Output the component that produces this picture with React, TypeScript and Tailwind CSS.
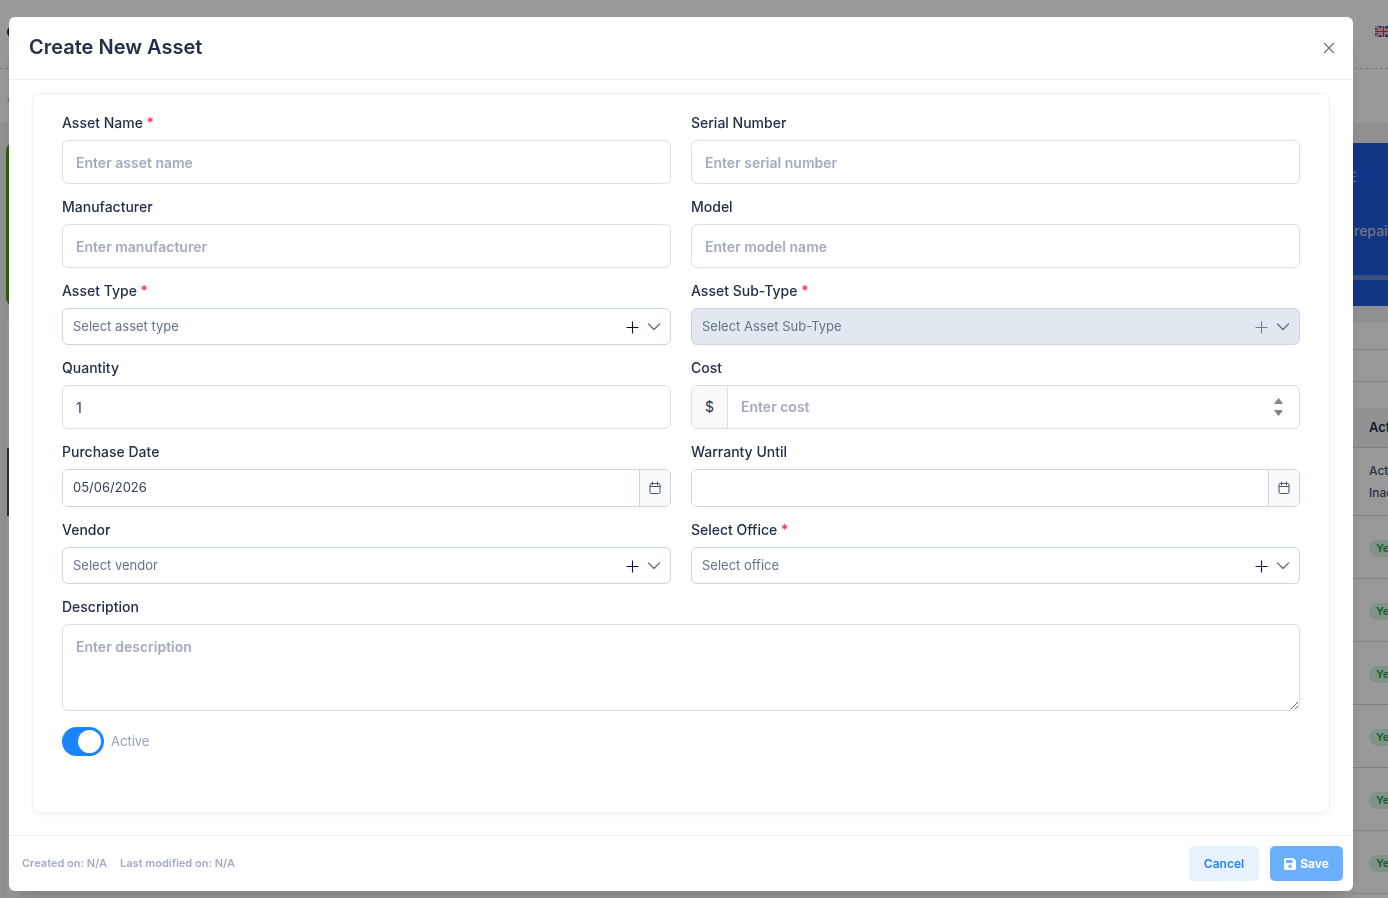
import { useState, type ReactNode } from 'react';

type FieldProps = {
  id: string;
  label: string;
  required?: boolean;
  className?: string;
  children: ReactNode;
};

const Field = ({ id, label, required, className = '', children }: FieldProps) => (
  <div className={`flex min-w-0 flex-col gap-[7px] ${className}`}>
    <label htmlFor={id} className="text-sm leading-5 font-medium text-[#252f4a]">
      {label}
      {required && <span className="text-[#f8285a]"> *</span>}
    </label>
    {children}
  </div>
);

const TextInput = ({ id, placeholder, defaultValue }: { id: string; placeholder?: string; defaultValue?: string }) => (
  <input
    id={id}
    type="text"
    placeholder={placeholder}
    defaultValue={defaultValue}
    className="h-11 w-full rounded-md border border-[#dbdfe9] bg-white px-[13px] text-sm font-medium text-[#4b5675] outline-none placeholder:font-semibold placeholder:text-[#a3abc0]"
  />
);

const PlusIcon = () => (
  <svg viewBox="0 0 13 13" className="size-[13px]" fill="none" stroke="currentColor" strokeWidth="1.1">
    <path d="M6.5 0.5v12M0.5 6.5h12" />
  </svg>
);

const ChevronIcon = () => (
  <svg
    viewBox="0 0 14 14"
    className="pointer-events-none size-[14px] shrink-0 text-[#64748b]"
    fill="none"
    stroke="currentColor"
    strokeWidth="1.4"
    strokeLinecap="round"
    strokeLinejoin="round"
  >
    <path d="M1.5 4 7 9.400l5.500-5.400" />
  </svg>
);

const CalendarIcon = () => (
  <svg viewBox="0 0 14 14" className="size-[14px]" fill="none" stroke="currentColor" strokeLinecap="round">
    <rect x="2" y="2.500" width="10" height="10" rx="1.300" />
    <path d="M2 5.500h10M4.500 1v3M9.500 1v3" />
  </svg>
);

const SaveIcon = () => (
  <svg viewBox="0 0 12 12" className="size-3" fill="currentColor" fillRule="evenodd">
    <path d="M1.700 0h7.600L12 2.700v7.600A1.700 1.700 0 0 1 10.300 12H1.700A1.700 1.700 0 0 1 0 10.300V1.700A1.700 1.700 0 0 1 1.700 0ZM2 2v3h6.500V2ZM6 6.500a1.700 1.700 0 1 0 0 3.400a1.700 1.700 0 0 0 0-3.400Z" />
  </svg>
);

const SelectField = ({
  id,
  label,
  placeholder,
  required,
  disabled,
}: {
  id: string;
  label: string;
  placeholder: string;
  required?: boolean;
  disabled?: boolean;
}) => (
  <Field id={id} label={label} required={required}>
    <div
      className={`flex h-[37px] items-center rounded-md border border-[#cbd5e1] pr-[9px] ${
        disabled ? 'bg-[#e2e8f0]' : 'bg-white'
      }`}
    >
      <select
        id={id}
        disabled={disabled}
        defaultValue=""
        className="h-full min-w-0 flex-1 appearance-none bg-transparent pl-[10px] text-[13px] text-[#64748b] opacity-100 outline-none"
      >
        <option value="">{placeholder}</option>
      </select>
      <button
        type="button"
        aria-label={`Add ${label}`}
        disabled={disabled}
        className="mr-2 pt-[2px] text-[#071437] disabled:opacity-50"
      >
        <PlusIcon />
      </button>
      <ChevronIcon />
    </div>
  </Field>
);

const DateField = ({ id, label, value }: { id: string; label: string; value?: string }) => (
  <Field id={id} label={label}>
    <div className="flex h-[38px] overflow-hidden rounded-md border border-[#cbd5e1]">
      <input
        id={id}
        type="text"
        defaultValue={value}
        className="min-w-0 flex-1 bg-white px-[10px] text-[13px] text-[#334155] outline-none"
      />
      <button
        type="button"
        aria-label={`Choose ${label}`}
        className="flex w-[31px] items-center justify-center border-l border-[#cbd5e1] bg-[#f8fafc] text-[#475569]"
      >
        <CalendarIcon />
      </button>
    </div>
  </Field>
);

const Flag = () => (
  <svg viewBox="0 0 18 11" className="h-[11px] w-[18px]">
    <rect width="18" height="11" fill="#2c4aa0" />
    <path d="M0 0l18 11M18 0L0 11" stroke="#fff" strokeWidth="2.400" />
    <path d="M0 0l18 11M18 0L0 11" stroke="#e0283c" strokeWidth="0.700" />
    <path d="M8.500 0v11M0 5.500h18" stroke="#fff" strokeWidth="3.600" />
    <path d="M8.500 0v11M0 5.500h18" stroke="#e0283c" strokeWidth="1.600" />
  </svg>
);

const rows = [1, 2, 3, 4, 5, 6];

const AssetsPage = () => (
  <div aria-hidden="true" className="h-screen overflow-hidden bg-[#f1f1f4] whitespace-nowrap">
    <div className="flex h-[69px] items-start justify-between border-b border-dashed border-[#c4cada] bg-white pt-[26px] pl-[7px]">
      <span className="size-3 rounded-full bg-[#101b3b]" />
      <div className="w-[13px] overflow-hidden">
        <Flag />
      </div>
    </div>
    <div className="h-[54px] bg-white pt-[19px] pl-[7px] text-[13px] font-semibold text-[#99a1b7]">A</div>
    <div className="mt-5 flex h-[163px] justify-between pl-[6px]">
      <div className="w-[300px] rounded-lg bg-[#3fa60c]" />
      <div className="flex w-[36px] flex-col overflow-hidden bg-[#1f59e0] text-[#b5c0dd]">
        <span className="mt-[25px] -ml-[3px] text-[13px] leading-[18px]">E</span>
        <span className="mt-[35px] pl-[2px] text-sm leading-5 font-medium">repair</span>
        <span className="mt-[34px] h-[5px] bg-[#6884cd]" />
      </div>
    </div>
    <div className="mt-[17px] ml-[7px] flex h-full bg-white">
      <div className="mt-[125px] h-[68px] w-10 bg-[#474b5c]" />
      <div className="ml-auto w-[36px] overflow-hidden text-xs text-[#4b5675]">
        <div className="h-[27px] border-b border-[#d1d5e0]" />
        <div className="h-8 border-b border-[#d1d5e0]" />
        <div className="mt-[26px] h-10 border-b border-[#d1d5e0] bg-[#f1f3f7] pl-[17px] text-[13px] leading-[38px] font-semibold text-[#252f4a]">
          Active
        </div>
        <div className="h-[68px] border-b border-[#d1d5e0] pt-3 pl-[17px] leading-[22px] font-medium">
          <div>Active</div>
          <div>Inactive</div>
        </div>
        {rows.map((row) => (
          <div key={row} className="flex h-[63px] items-center border-b border-[#d1d5e0] pl-[17px] first-of-type:h-16">
            <span className="mt-[2px] rounded-full bg-[#d5f5e0] px-[7px] text-[11px] leading-[17px] font-semibold text-[#1aa251]">
              Yes
            </span>
          </div>
        ))}
      </div>
    </div>
  </div>
);

export default function App() {
  const [active, setActive] = useState(true);
  const [cost, setCost] = useState('');

  const stepCost = (step: number) => setCost(String(Math.max(0, Number(cost) + step)));

  return (
    <div className="font-[Inter,sans-serif]">
      <AssetsPage />

      <div className="fixed inset-0 flex bg-black/40 pt-[17px] pr-[35px] pb-[7px] pl-[9px]">
        <div
          role="dialog"
          aria-labelledby="dialog-title"
          className="flex min-w-0 flex-1 flex-col rounded-md bg-white shadow-xl"
        >
          <header className="flex h-[63px] shrink-0 items-center justify-between border-b border-[#f1f1f4] pr-[18px] pl-5">
            <h1 id="dialog-title" className="pb-[2px] text-xl font-semibold text-[#252f4a]">
              Create New Asset
            </h1>
            <button type="button" aria-label="Close" className="text-[#707070]">
              <svg viewBox="0 0 12 12" className="size-3" fill="none" stroke="currentColor" strokeWidth="1.200">
                <path d="M1 1l10 10M11 1L1 11" />
              </svg>
            </button>
          </header>

          <form id="asset-form" className="flex min-h-0 flex-1 px-[23px] pt-[13px] pb-[22px]">
            <div className="flex flex-1 flex-col rounded-lg border border-[#f1f1f4] px-[29px] pt-[19px] shadow-[0_3px_4px_0_rgba(0,0,0,0.03)]">
              <div className="grid grid-cols-2 gap-x-5 gap-y-[13px]">
                <Field id="name" label="Asset Name" required>
                  <TextInput id="name" placeholder="Enter asset name" />
                </Field>
                <Field id="serial" label="Serial Number">
                  <TextInput id="serial" placeholder="Enter serial number" />
                </Field>
                <Field id="manufacturer" label="Manufacturer">
                  <TextInput id="manufacturer" placeholder="Enter manufacturer" />
                </Field>
                <Field id="model" label="Model">
                  <TextInput id="model" placeholder="Enter model name" />
                </Field>
                <SelectField id="type" label="Asset Type" placeholder="Select asset type" required />
                <SelectField id="subtype" label="Asset Sub-Type" placeholder="Select Asset Sub-Type" required disabled />
                <Field id="quantity" label="Quantity">
                  <TextInput id="quantity" defaultValue="1" />
                </Field>
                <Field id="cost" label="Cost">
                  <div className="flex h-11 overflow-hidden rounded-md border border-[#dbdfe9]">
                    <span className="flex w-9 items-center justify-center border-r border-[#dbdfe9] bg-[#f9f9f9] text-sm text-[#252f4a]">
                      $
                    </span>
                    <input
                      id="cost"
                      type="text"
                      inputMode="decimal"
                      placeholder="Enter cost"
                      value={cost}
                      onChange={(e) => setCost(e.target.value)}
                      className="min-w-0 flex-1 px-[13px] text-sm font-medium text-[#4b5675] outline-none placeholder:font-semibold placeholder:text-[#a3abc0]"
                    />
                    <div className="mr-[13px] flex w-[15px] flex-col items-center justify-center gap-[6px] text-[#858585]">
                      <button type="button" aria-label="Increase cost" onClick={() => stepCost(1)}>
                        <svg viewBox="0 0 9 6" className="h-[6px] w-[9px]" fill="currentColor">
                          <path d="M4.500 0 8.500 5V6H0.500V5Z" />
                        </svg>
                      </button>
                      <button type="button" aria-label="Decrease cost" onClick={() => stepCost(-1)}>
                        <svg viewBox="0 0 9 6" className="h-[6px] w-[9px]" fill="currentColor">
                          <path d="M4.500 6 8.500 1V0H0.500v1Z" />
                        </svg>
                      </button>
                    </div>
                  </div>
                </Field>
                <DateField id="purchase" label="Purchase Date" value="05/06/2026" />
                <DateField id="warranty" label="Warranty Until" />
                <SelectField id="vendor" label="Vendor" placeholder="Select vendor" />
                <SelectField id="office" label="Select Office" placeholder="Select office" required />
                <Field id="description" label="Description" className="col-span-2">
                  <textarea
                    id="description"
                    placeholder="Enter description"
                    className="h-[87px] w-full resize-y rounded-md border border-[#dbdfe9] px-[13px] py-3 text-sm font-medium text-[#4b5675] outline-none placeholder:font-semibold placeholder:text-[#a3abc0]"
                  />
                </Field>
              </div>

              <label className="mt-4 flex items-center gap-[7px] self-start text-[13px] text-[#99a1b7]">
                <input
                  type="checkbox"
                  role="switch"
                  checked={active}
                  onChange={(e) => setActive(e.target.checked)}
                  className="peer sr-only"
                />
                <span className="flex h-[29px] w-[42px] items-center rounded-full bg-[#dbdfe9] px-[3px] peer-checked:justify-end peer-checked:bg-[#1b84ff]">
                  <span className="size-[23px] rounded-full bg-white" />
                </span>
                Active
              </label>
            </div>
          </form>

          <footer className="flex h-14 shrink-0 items-center justify-between border-t border-[#f1f1f4] pr-[10px] pl-[13px]">
            <div className="flex gap-[13px] text-[11px] font-semibold text-[#a3abc0]">
              <span>Created on: N/A</span>
              <span>Last modified on: N/A</span>
            </div>
            <div className="flex gap-[11px] text-xs font-semibold">
              <button type="button" className="h-[35px] w-[70px] rounded-[5px] bg-[#e9f3ff] text-[#1b84ff]">
                Cancel
              </button>
              <button
                type="submit"
                form="asset-form"
                disabled
                className="flex h-[35px] w-[73px] items-center justify-center gap-1 rounded-[5px] bg-[#6bafff] font-bold text-white"
              >
                <SaveIcon />
                Save
              </button>
            </div>
          </footer>
        </div>
      </div>
    </div>
  );
}
